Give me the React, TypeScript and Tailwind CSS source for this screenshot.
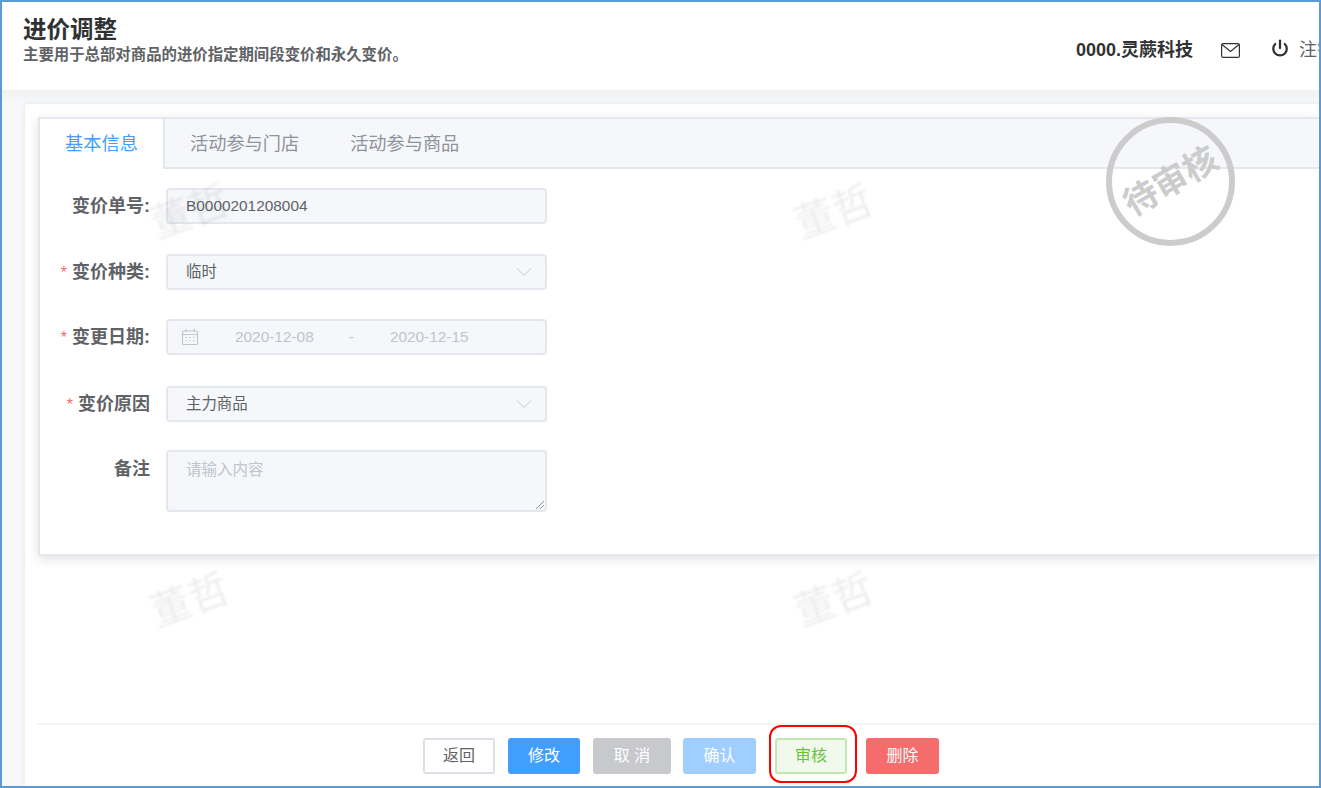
import { ChevronDown, Power } from 'lucide-react'

const FONT = "font-['Liberation_Sans','Noto_Sans_CJK_SC',sans-serif]"

const Label = ({ text, required, top = '' }: { text: string; required?: boolean; top?: string }) => (
    <div className={`w-[110px] shrink-0 text-right text-lg font-bold text-[#606266] ${top}`}>
        {required && <span className="mr-[5px] text-base font-normal text-[#f56c6c]">*</span>}
        {text}
    </div>
)

const Select = ({ value }: { value: string }) => (
    <div className="flex h-[36px] w-[381px] items-center justify-between rounded-[4px] border-2 border-[#e4e7ed] bg-[#f5f7fa] pl-[18px] pr-[7px] text-[15.4px] text-[#606266]">
        <span>{value}</span>
        <ChevronDown className="size-[28px] text-[#c0c4cc]" strokeWidth={0.8} />
    </div>
)

const Watermark = ({ className }: { className: string }) => (
    <div className={`pointer-events-none absolute -rotate-[20deg] text-[40px] font-normal text-black/[0.07] blur-[1px] ${className}`}>
        董哲
    </div>
)

const CalendarIcon = () => (
    <svg width="18" height="18" viewBox="0 0 18 18" fill="none" stroke="#c0c4cc" strokeWidth="1.1">
        <rect x="1.5" y="3" width="15" height="13.5" rx="1" />
        <path d="M1.5 6.5h15M5 1v3M13 1v3" />
        <path d="M4.5 9.5h1.5M8.2 9.5h1.5M12 9.5h1.5M4.5 12.8h1.5M8.2 12.8h1.5M12 12.8h1.5" />
    </svg>
)

export default function App() {
    return (
        <div className={`relative flex h-[788px] w-[1321px] flex-col overflow-hidden border-2 border-[#5b9bd5] bg-white ${FONT}`}>
            <header className="flex h-[88px] shrink-0 justify-between bg-white pl-[21px]">
                <div className="pt-[13px]">
                    <h1 className="text-[23.5px] leading-[30px] font-bold text-[#303133]">进价调整</h1>
                    <p className="text-[15.4px] leading-[20px] font-bold text-[#606266]">
                        主要用于总部对商品的进价指定期间段变价和永久变价。
                    </p>
                </div>
                <div className="flex h-[96px] w-[243px] shrink-0 items-center overflow-hidden whitespace-nowrap text-[#303133]">
                    <span className="text-lg font-bold">0000.灵蕨科技</span>
                    <svg className="ml-[28px] shrink-0" width="19" height="15" viewBox="0 0 19 15" fill="none" stroke="#303133" strokeWidth="1.2">
                        <rect x="0.6" y="0.6" width="17.8" height="13.8" rx="1.5" />
                        <path d="M1 1.5l8.5 7 8.5-7" />
                    </svg>
                    <Power className="ml-[31px] size-[18px] shrink-0 -translate-y-[2px]" strokeWidth={3} />
                    <span className="ml-[10px] text-lg text-[#606266]">注销</span>
                </div>
            </header>

            <main className="relative flex min-h-0 flex-1 flex-col bg-gradient-to-b from-[#f0f1f3] to-[#f7f8fa] to-[14px] pl-[23px] pt-[14px]">
                <section className="flex flex-1 flex-col rounded-tl-[4px] bg-white pl-[13px] pt-[13px] shadow-[0_0_6px_rgba(0,0,0,0.08)]">
                    <div className="h-[439px] border-2 border-r-0 border-[#e4e7ed] bg-white shadow-[0_3px_10px_rgba(0,0,0,0.12)]">
                        <div className="flex h-[50px] border-b-2 border-[#e4e7ed] bg-[#f5f7fa] text-[18.2px] leading-[50px] text-[#909399]">
                            <div className="h-[50px] w-[125px] border-r-2 border-[#e4e7ed] bg-white text-center text-[#409eff]">
                                基本信息
                            </div>
                            <div className="ml-[25px]">活动参与门店</div>
                            <div className="ml-[51px]">活动参与商品</div>
                        </div>

                        <div className="pt-[19px]">
                            <div className="flex items-center gap-[16px]">
                                <Label text="变价单号:" />
                                <div className="flex h-[36px] w-[381px] items-center rounded-[4px] border-2 border-[#e4e7ed] bg-[#f5f7fa] pl-[18px] text-[15.4px] text-[#606266]">
                                    B0000201208004
                                </div>
                            </div>
                            <div className="mt-[30px] flex items-center gap-[16px]">
                                <Label text="变价种类:" required />
                                <Select value="临时" />
                            </div>
                            <div className="mt-[29px] flex items-center gap-[16px]">
                                <Label text="变更日期:" required />
                                <div className="flex h-[36px] w-[381px] items-center rounded-[4px] border-2 border-[#e4e7ed] bg-[#f5f7fa] pl-[13px] text-[15.4px] text-[#c0c4cc]">
                                    <CalendarIcon />
                                    <span className="ml-[36px]">2020-12-08</span>
                                    <span className="ml-[35px]">-</span>
                                    <span className="ml-[36px]">2020-12-15</span>
                                </div>
                            </div>
                            <div className="mt-[31px] flex items-center gap-[16px]">
                                <Label text="变价原因" required />
                                <Select value="主力商品" />
                            </div>
                            <div className="mt-[28px] flex items-start gap-[16px]">
                                <Label text="备注" top="pt-[5px]" />
                                <div className="relative h-[62px] w-[381px] rounded-[4px] border-2 border-[#e4e7ed] bg-[#f5f7fa] pl-[18px] pt-[6px] text-[15.5px] text-[#c0c4cc]">
                                    请输入内容
                                    <svg className="absolute bottom-0 right-0" width="10" height="10" viewBox="0 0 10 10" stroke="#777" strokeWidth="0.8">
                                        <path d="M1 9l8-8M5 9l4-4" />
                                    </svg>
                                </div>
                            </div>
                        </div>
                    </div>

                    <div className="mt-auto ml-[-1px] flex h-[63px] justify-center gap-[13px] border-t-2 border-[#f2f3f5] pl-[6px] pt-[13px] text-base">
                        <button className="h-[36px] w-[72px] rounded-[3px] border-2 border-[#dcdfe6] bg-white text-[#606266]">返回</button>
                        <button className="h-[36px] w-[72px] rounded-[3px] bg-[#409eff] text-white">修改</button>
                        <button className="h-[36px] w-[78px] rounded-[3px] bg-[#c8c9cc] text-white">取 消</button>
                        <button className="-ml-[1px] h-[36px] w-[73px] rounded-[3px] bg-[#a0cfff] text-white">确认</button>
                        <div className="relative ml-[6px] mr-[6px]">
                            <button className="h-[36px] w-[72px] rounded-[3px] border-2 border-[#c2e7b0] bg-[#f0f9eb] text-[#67c23a]">审核</button>
                            <div className="pointer-events-none absolute -left-[6px] -right-[10px] -top-[13px] h-[58px] rounded-[12px] border-2 border-[#ff0000]" />
                        </div>
                        <button className="h-[36px] w-[73px] rounded-[3px] bg-[#f56c6c] text-white">删除</button>
                    </div>
                </section>

                <Watermark className="left-[148px] top-[92px]" />
                <Watermark className="left-[792px] top-[92px]" />
                <Watermark className="left-[148px] top-[480px]" />
                <Watermark className="left-[792px] top-[480px]" />

                <div className="pointer-events-none absolute left-[1104px] top-[27px] flex size-[129px] items-center justify-center rounded-full border-[6px] border-[#cccccc]">
                    <span className="-rotate-[30deg] whitespace-nowrap text-[34px] font-bold text-[#cccccc]">待审核</span>
                </div>
            </main>
        </div>
    )
}
